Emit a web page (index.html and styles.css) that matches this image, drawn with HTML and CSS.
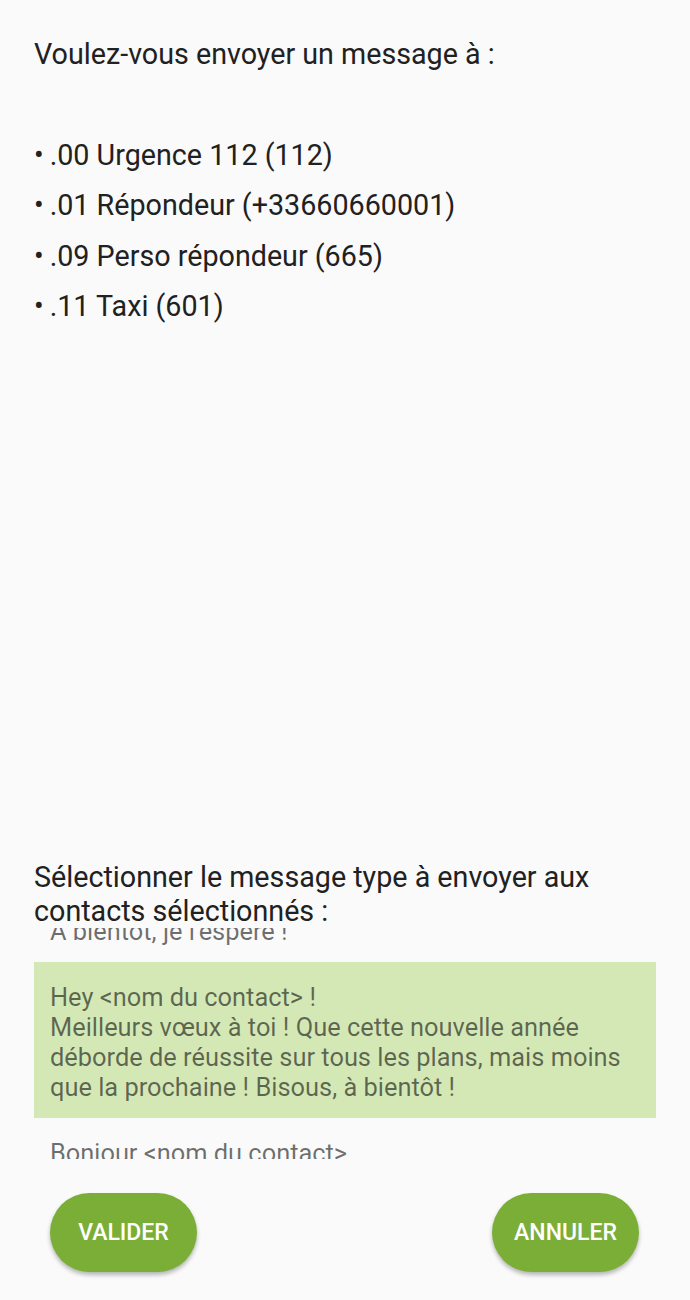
FILE: index.html
```html
<!DOCTYPE html>
<html lang="fr">
<head>
  <meta charset="UTF-8">
  <title>Envoyer un message</title>
  <meta name="viewport" content="width=device-width, initial-scale=1.0">
  <link rel="stylesheet" href="styles.css">
</head>
<body>
  <main class="dialog">
    <section class="recipients">
      <p class="question">Voulez-vous envoyer un message à :</p>
      <ul class="contact-list">
        <li>.00 Urgence 112 (112)</li>
        <li>.01 Répondeur (+33660660001)</li>
        <li>.09 Perso répondeur (665)</li>
        <li>.11 Taxi (601)</li>
      </ul>
    </section>

    <section class="templates">
      <p class="question">Sélectionner le message type à envoyer aux contacts sélectionnés :</p>
      <div class="template-scroll">
        <div class="template-list">
          <div class="template">Coucou !<br>A bientôt, je l'espère !</div>
          <div class="template selected">Hey &lt;nom du contact&gt; !<br>Meilleurs vœux à toi ! Que cette nouvelle année déborde de réussite sur tous les plans, mais moins que la prochaine ! Bisous, à bientôt !</div>
          <div class="template">Bonjour &lt;nom du contact&gt;<br>Je te souhaite une bonne journée.</div>
        </div>
      </div>
    </section>

    <div class="actions">
      <button class="btn">Valider</button>
      <button class="btn">Annuler</button>
    </div>
  </main>
</body>
</html>
```

FILE: styles.css
```css
* { box-sizing: border-box; }
html, body {
  margin: 0;
  height: 100%;
}
body {
  background: #fafafa;
  color: #212121;
  font-family: Roboto, "Noto Sans", sans-serif;
}
.dialog {
  display: flex;
  flex-direction: column;
  min-height: 1300px;
  padding: 37px 34px 28px;
}
.question {
  margin: 0;
  font-size: 28.7px;
  line-height: 34px;
}
.recipients {
  flex: 1;
}
.contact-list {
  list-style: none;
  margin: 59px 0 0;
  padding: 0;
}
.contact-list li {
  font-size: 28.7px;
  line-height: 50.3px;
}
.contact-list li::before {
  content: "\2022";
  margin-right: 6px;
}
.template-scroll {
  height: 231px;
  overflow: hidden;
}
.template-list {
  margin-top: -62px;
}
.template {
  padding: 20px 16px 16px;
  font-size: 25.4px;
  line-height: 30px;
  color: rgba(0, 0, 0, 0.56);
}
.template.selected {
  background: #d4e8b6;
}
.actions {
  display: flex;
  justify-content: space-between;
  padding: 34px 17px 0 16px;
}
.btn {
  width: 147px;
  height: 79px;
  border: none;
  border-radius: 40px;
  background: #7aae37;
  color: #fff;
  font-family: Roboto, "Noto Sans", sans-serif;
  font-size: 23px;
  font-weight: 500;
  text-transform: uppercase;
  box-shadow: 0 3px 4px rgba(0, 0, 0, 0.28);
  cursor: pointer;
}
```
